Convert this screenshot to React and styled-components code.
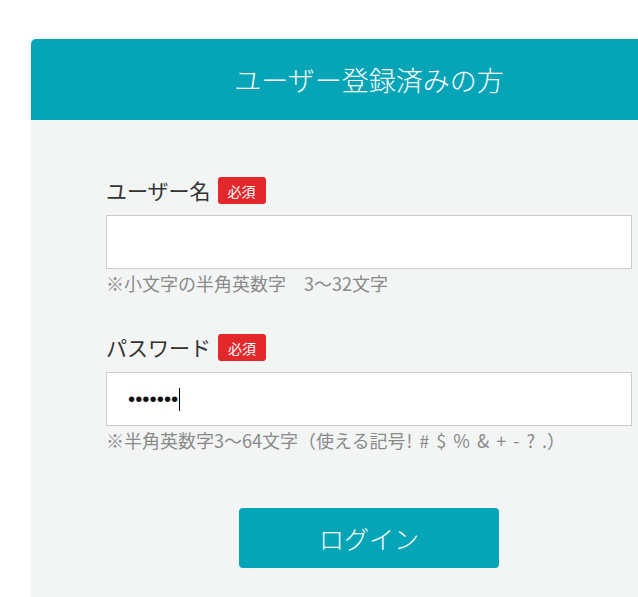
import React from 'react'
import styled, { createGlobalStyle } from 'styled-components'

const GlobalStyle = createGlobalStyle`
    html, body {
        margin: 0;
        padding: 0;
        background: #ffffff;
        overflow: hidden;
    }
    * {
        box-sizing: border-box;
    }
`;

export default function App() {
    const fields = [
        {
            label: 'ユーザー名',
            hint: <>※小文字の半角英数字　3〜32文字</>,
            value: '',
        },
        {
            label: 'パスワード',
            hint: <>※半角英数字3〜64文字（使える記号<Symbols>! # $ % &amp; + - ? .</Symbols>）</>,
            value: '•••••••',
            caret: true,
        },
    ];

    return (
        <>
            <GlobalStyle />
            <Page>
                <Card>
                    <Header>
                        <Title>ユーザー登録済みの方</Title>
                    </Header>
                    <Body>
                        {fields.map((f, i) => (
                            <Field key={f.label} $first={i === 0}>
                                <LabelRow>
                                    <Label>{f.label}</Label>
                                    <Required>必須</Required>
                                </LabelRow>
                                <InputBox>
                                    {f.value && <Dots>{f.value}</Dots>}
                                    {f.caret && <Caret />}
                                </InputBox>
                                <Hint>{f.hint}</Hint>
                            </Field>
                        ))}
                        <ButtonRow>
                            <LoginButton type="button">ログイン</LoginButton>
                        </ButtonRow>
                    </Body>
                </Card>
            </Page>
        </>
    )
}

const Page = styled.div`
    padding: 39px 0 0 31px;
    width: 638px;
    height: 597px;
    overflow: hidden;
    font-family: "Noto Sans CJK JP", "Noto Sans", sans-serif;
`;

const Card = styled.div`
    width: 676px;
    border-radius: 5px 5px 0 0;
    overflow: hidden;
`;

const Header = styled.div`
    height: 81px;
    background-color: #05a5b7;
    display: flex;
    align-items: center;
    justify-content: center;
`;

const Title = styled.h1`
    margin: 0;
    color: #ffffff;
    font-size: 27px;
    font-weight: 300;
    line-height: 1;
    letter-spacing: 0;
`;

const Body = styled.div`
    background-color: #f2f5f4;
    padding: 57px 75px 60px;
`;

const Field = styled.div`
    margin-top: ${props => props.$first ? '0' : '39px'};
`;

const LabelRow = styled.div`
    display: flex;
    align-items: center;
    gap: 7px;
    height: 27px;
    margin-bottom: 11px;
`;

const Label = styled.span`
    color: #333333;
    font-size: 21px;
    font-weight: 400;
    line-height: 27px;
`;

const Required = styled.span`
    display: inline-flex;
    align-items: center;
    justify-content: center;
    width: 48px;
    height: 27px;
    border-radius: 3px;
    background-color: #e3282c;
    color: #ffffff;
    font-size: 14px;
    line-height: 1;
`;

const InputBox = styled.div`
    height: 54px;
    background: #ffffff;
    border: 1px solid #cccccc;
    display: flex;
    align-items: center;
    padding-left: 21px;
`;

const Dots = styled.span`
    font-family: "Liberation Sans", sans-serif;
    font-size: 20.5px;
    color: #111111;
    line-height: 1;
`;

const Caret = styled.span`
    width: 1px;
    height: 23px;
    background: #000000;
    margin-left: 1px;
`;

const Hint = styled.p`
    margin: 2px 0 0;
    color: #8a8a8a;
    font-size: 18px;
    font-weight: 400;
    line-height: 24px;
    white-space: nowrap;
`;

const Symbols = styled.span`
    margin-left: 1px;
    word-spacing: 3px;
`;

const ButtonRow = styled.div`
    display: flex;
    justify-content: center;
    margin-top: 56px;
`;

const LoginButton = styled.button`
    width: 260px;
    height: 60px;
    border: none;
    border-radius: 4px;
    background-color: #05a5b7;
    color: #ffffff;
    font-family: inherit;
    font-size: 25px;
    font-weight: 300;
    line-height: 1;
    cursor: pointer;
`;
